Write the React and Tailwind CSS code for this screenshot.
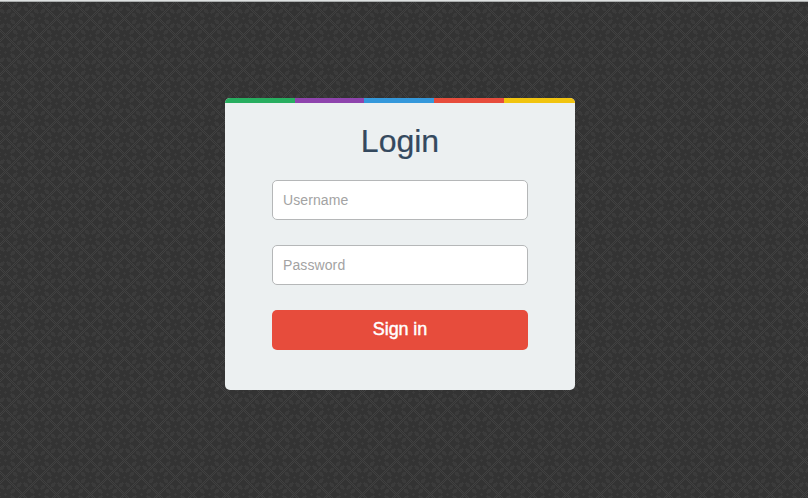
const TILE = 34;

// Distance to the nearest repeat of a star centre along one axis.
const fold = (n) => {
  const m = ((n % TILE) + TILE) % TILE;
  return Math.min(m, TILE - m);
};

const isLine = (u, v) => u + v === 16;

const isPetal = (u, v) => {
  const s = u + v;
  const d = Math.abs(u - v);
  if (s <= 1) return true;
  if (d < 2 || d > 6 || s < 7 || s > 14) return false;
  return !((d === 2 || d === 6) && (s <= 8 || s === 14));
};

const trace = (test) => {
  const cells = [];
  for (let y = 0; y < TILE; y++) {
    for (let x = 0; x < TILE; x++) {
      const a = [fold(x - 5), fold(y - 18)];
      const b = [fold(x - 22), fold(y - 1)];
      const [u, v] = a[0] + a[1] <= b[0] + b[1] ? a : b;
      if (test(u, v)) cells.push(`M${x} ${y}h1v1h-1z`);
    }
  }
  return cells.join("");
};

const lines = trace(isLine);
const petals = trace(isPetal);

function Texture() {
  return (
    <svg className="absolute inset-0 h-full w-full" shapeRendering="crispEdges" aria-hidden="true">
      <defs>
        <pattern id="weave" width={TILE} height={TILE} patternUnits="userSpaceOnUse">
          <rect width={TILE} height={TILE} fill="#333333" />
          <path d={petals} fill="#3b3b3b" />
          <path d={lines} fill="#414141" />
        </pattern>
      </defs>
      <rect width="100%" height="100%" fill="url(#weave)" />
    </svg>
  );
}

const field =
  "block h-10 w-full rounded-[5px] border border-[#b5b7b8] bg-white px-2.5 text-sm tracking-[0.1px] text-[#34495e] outline-none placeholder:text-[#a3a3a3] placeholder:opacity-100";

export default function App() {
  return (
    <div className="relative h-[498px] w-[808px] overflow-hidden bg-[#333333] font-['Liberation_Sans',Arial,sans-serif]">
      <Texture />
      <div className="relative flex h-full flex-col">
        <div className="h-0.5 shrink-0 border-b border-[#a9acac] bg-[#dcdfdf]" />
        <main className="flex justify-center pt-24 pr-2">
          <form className="h-[292px] w-[350px] overflow-hidden rounded-[5px] bg-[#ecf0f1]" onSubmit={(e) => e.preventDefault()}>
            <div className="flex h-[5px]">
              <span className="w-[70px] bg-[#27ae60]" />
              <span className="w-[69px] bg-[#8e44ad]" />
              <span className="w-[70px] bg-[#3498db]" />
              <span className="w-[70px] bg-[#e74c3c]" />
              <span className="flex-1 bg-[#f1c40f]" />
            </div>
            <div className="flex flex-col px-[47px] pt-5">
              <h1 className="h-[57px] text-center text-[32px] leading-9 text-[#34495e] [-webkit-text-stroke:0.2px_#34495e]">Login</h1>
              <div className="flex flex-col gap-[25px]">
                <input className={field} type="text" placeholder="Username" />
                <input className={field} type="password" placeholder="Password" />
                <button className="h-10 rounded-[5px] bg-[#e74c3c] pb-0.5 text-lg tracking-[-0.1px] text-white [-webkit-text-stroke:0.45px_white]">
                  Sign in
                </button>
              </div>
            </div>
          </form>
        </main>
      </div>
    </div>
  );
}
